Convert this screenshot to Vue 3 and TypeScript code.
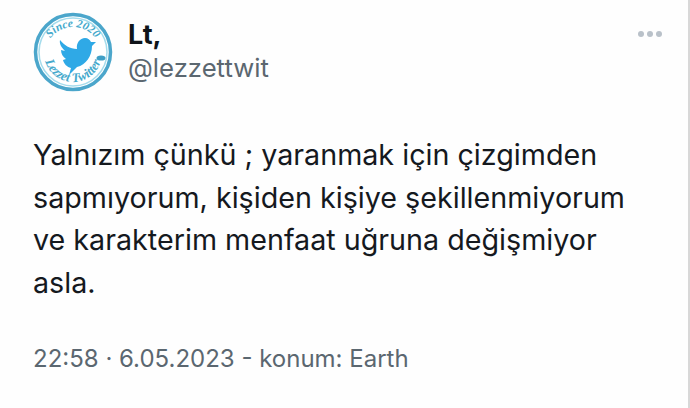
<script setup lang="ts">
const name = 'Lt,'
const handle = '@lezzettwit'
const lines = [
  'Yalnızım çünkü ; yaranmak için çizgimden',
  'sapmıyorum, kişiden kişiye şekillenmiyorum',
  've karakterim menfaat uğruna değişmiyor',
  'asla.',
]
const meta = '22:58 · 6.05.2023 - konum: Earth'
</script>

<template>
  <main class="tweet">
    <header class="head">
      <svg class="avatar" viewBox="0 0 80 80" width="80" height="80">
        <defs>
          <path id="arcTop" d="M12 43 A28 28 0 0 1 68 43" />
          <path id="arcBottom" d="M11 41 A29 29 0 0 0 69 41" />
        </defs>
        <circle cx="40" cy="40" r="37.5" fill="#fff" stroke="#4ba6cb" stroke-width="3.5" />
        <circle cx="40" cy="40" r="34" fill="none" stroke="#a5dcec" stroke-width="1.5" />
        <text class="stamp top"><textPath href="#arcTop" startOffset="50%">Since 2020</textPath></text>
        <text class="stamp bottom"><textPath href="#arcBottom" startOffset="50%">Lezzet Twitter</textPath></text>
        <path
          fill="#2fa9e6"
          d="M27 28 C31 33 37 37 44 37 C43 31 47 26 52 26 C55 26 57 28 58 30 L63 30 L59 34 C59 44 53 53 44 55 L36 63 L38 56 C34 55 31 52 30 48 L33 47 C30 45 28 42 28 38 L32 39 C29 36 26 32 27 28 Z"
        />
        <ellipse cx="68" cy="46" rx="4.5" ry="2.6" fill="#3f9fc6" />
      </svg>
      <div class="who">
        <div class="name">{{ name }}</div>
        <div class="handle">{{ handle }}</div>
      </div>
      <div class="more" aria-label="more"><i></i><i></i><i></i></div>
    </header>
    <p class="body"><span v-for="l in lines" :key="l" class="line">{{ l }}</span></p>
    <footer class="meta">{{ meta }}</footer>
  </main>
</template>

<style>
html, body { margin: 0; background: #fff; }
</style>

<style scoped>
.tweet {
  box-sizing: border-box;
  width: 690px;
  height: 408px;
  padding: 12px 0 0 33px;
  background: #fefefe;
  border-right: 2px solid #d8d8d8;
  font-family: Inter, Roboto, sans-serif;
  overflow: hidden;
}
.head { display: flex; align-items: flex-start; }
.avatar { flex: none; margin-right: 15px; }
.stamp { font-family: "Liberation Serif", serif; font-style: italic; font-weight: 700; fill: #45a9cc; text-anchor: middle; }
.top { font-size: 11.5px; }
.bottom { font-size: 13px; }
.who { margin-top: 6px; }
.name { font-size: 27px; line-height: 33px; font-weight: 700; color: #0f1419; }
.handle { font-size: 25.7px; line-height: 33px; color: #5b6770; }
.more { margin: 19px 26px 0 auto; display: flex; gap: 3px; }
.more i { width: 6px; height: 6px; border-radius: 50%; background: #b9c1c9; }
.body { margin: 42px 0 0; font-size: 28.7px; line-height: 42.5px; color: #15191e; }
.line { display: block; white-space: nowrap; }
.meta { margin-top: 39px; font-size: 24px; line-height: 32px; color: #5b6770; }
</style>
